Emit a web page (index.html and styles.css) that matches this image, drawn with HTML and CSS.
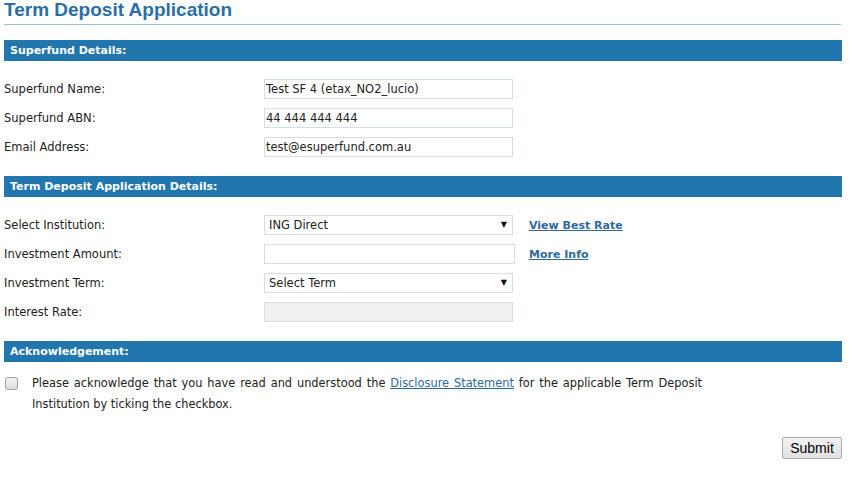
FILE: index.html
```html
<!DOCTYPE html>
<html>
<head>
<meta charset="utf-8">
<link rel="stylesheet" href="styles.css">
</head>
<body>
<div class="page">
  <h1 class="title">Term Deposit Application</h1>

  <div class="bar">Superfund Details:</div>
  <div class="rows">
    <div class="row"><span class="label">Superfund Name:</span><span class="field">Test SF 4 (etax_NO2_lucio)</span></div>
    <div class="row"><span class="label">Superfund ABN:</span><span class="field">44 444 444 444</span></div>
    <div class="row"><span class="label">Email Address:</span><span class="field">test@esuperfund.com.au</span></div>
  </div>

  <div class="bar">Term Deposit Application Details:</div>
  <div class="rows">
    <div class="row"><span class="label">Select Institution:</span><span class="field select">ING Direct<span class="arrow">&#9660;</span></span><a class="link" href="#">View Best Rate</a></div>
    <div class="row"><span class="label">Investment Amount:</span><span class="field wide"></span><a class="link" href="#">More Info</a></div>
    <div class="row"><span class="label">Investment Term:</span><span class="field select">Select Term<span class="arrow">&#9660;</span></span></div>
    <div class="row"><span class="label">Interest Rate:</span><span class="field disabled"></span></div>
  </div>

  <div class="bar">Acknowledgement:</div>
  <div class="ack">
    <span class="checkbox"></span>
    <p class="ack-text">Please acknowledge that you have read and understood the <a href="#" class="plain-link">Disclosure Statement</a> for the applicable Term Deposit Institution by ticking the checkbox.</p>
  </div>

  <div class="actions"><button class="submit">Submit</button></div>
</div>
</body>
</html>
```
FILE: styles.css
```css
* { box-sizing: border-box; }
body {
  margin: 0;
  background: #fff;
  font-family: "DejaVu Sans", Verdana, sans-serif;
  font-size: 11.5px;
  color: #222;
}
.page {
  padding: 0 10px 0 4px;
}
.title {
  margin: 0 1px 0 0;
  font-family: "Liberation Sans", Arial, sans-serif;
  font-weight: bold;
  font-size: 19px;
  line-height: 20px;
  color: #2a6ea6;
  padding-bottom: 4px;
  border-bottom: 1px solid #9cc3de;
}
.bar {
  margin-top: 15px;
  height: 21px;
  background: #2176ae;
  color: #fff;
  font-weight: bold;
  font-size: 11px;
  line-height: 21px;
  padding-left: 6px;
}
.rows + .bar { margin-top: 19px; }
.rows {
  padding-top: 18px;
  display: flex;
  flex-direction: column;
  gap: 9px;
}
.row {
  display: flex;
  align-items: center;
  height: 20px;
}
.label {
  width: 260px;
  flex: none;
}
.field {
  width: 249px;
  height: 20px;
  border: 1px solid #d3dfe6;
  background: #fff;
  padding: 0 0 0 1px;
  line-height: 18px;
  position: relative;
  flex: none;
  color: #222;
}
.field.wide { width: 251px; }
.field.select {
  padding-left: 4px;
  border-color: #d6dfe4;
}
.field.disabled { background: #f0f0f0; }
.arrow {
  position: absolute;
  right: 5px;
  top: 0;
  font-size: 8px;
  color: #111;
}
.link {
  margin-left: 16px;
  color: #2e6a9e;
  font-weight: bold;
  font-size: 11px;
  text-decoration: underline;
}
.row .field.wide + .link { margin-left: 14px; }
.ack {
  display: flex;
  align-items: flex-start;
  padding-top: 15px;
}
.checkbox {
  width: 13px;
  height: 13px;
  border: 1px solid #a0a0a0;
  border-radius: 3px;
  background: linear-gradient(#f4f4f4, #dcdcdc);
  margin: 0 0 0 1px;
  flex: none;
}
.ack-text {
  margin: -4px 0 0 14px;
  width: 670px;
  font-size: 11.4px;
  text-align: justify;
  line-height: 21px;
}
.plain-link { color: #2e6a9e; text-decoration: underline; }
.actions {
  display: flex;
  justify-content: flex-end;
  padding-top: 22px;
}
.submit {
  font-family: "Liberation Sans", Arial, sans-serif;
  font-size: 14px;
  height: 22px;
  width: 60px;
  padding: 0;
  border: 1px solid #adadad;
  border-radius: 2px;
  background: linear-gradient(#f2f2f2, #e1e1e1);
  color: #000;
}
```
